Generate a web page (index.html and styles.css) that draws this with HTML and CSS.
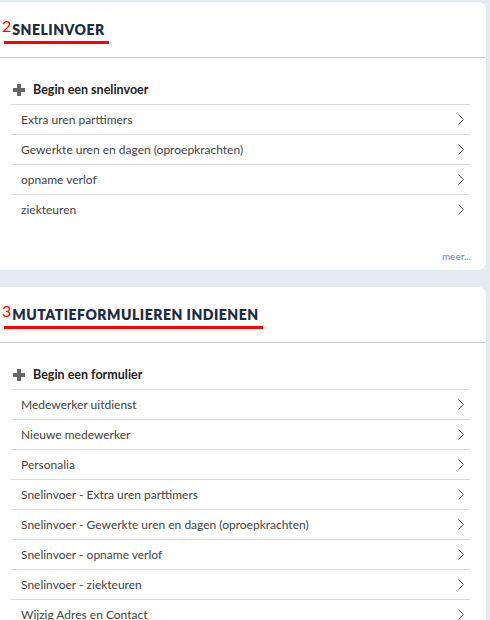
FILE: index.html
```html
<!DOCTYPE html>
<html lang="nl">
<head>
  <meta charset="UTF-8" />
  <title>Snelinvoer en mutatieformulieren</title>
  <link rel="stylesheet" href="styles.css">
</head>
<body>
  <div class="card">
    <div class="card-head">
      <h2 class="title"><span class="num">2</span>SNELINVOER</h2>
    </div>
    <ul class="list">
      <li class="start"><span class="plus"></span>Begin een snelinvoer</li>
      <li>Extra uren parttimers <svg class="chev" viewBox="0 0 6 11"><polyline points="0.5,0.5 5.5,5.5 0.5,10.5" /></svg></li>
      <li>Gewerkte uren en dagen (oproepkrachten) <svg class="chev" viewBox="0 0 6 11"><polyline points="0.5,0.5 5.5,5.5 0.5,10.5" /></svg></li>
      <li>opname verlof <svg class="chev" viewBox="0 0 6 11"><polyline points="0.5,0.5 5.5,5.5 0.5,10.5" /></svg></li>
      <li>ziekteuren <svg class="chev" viewBox="0 0 6 11"><polyline points="0.5,0.5 5.5,5.5 0.5,10.5" /></svg></li>
    </ul>
    <div class="more"><a href="#">meer...</a></div>
  </div>

  <div class="card">
    <div class="card-head">
      <h2 class="title"><span class="num">3</span>MUTATIEFORMULIEREN INDIENEN</h2>
    </div>
    <ul class="list">
      <li class="start"><span class="plus"></span>Begin een formulier</li>
      <li>Medewerker uitdienst <svg class="chev" viewBox="0 0 6 11"><polyline points="0.5,0.5 5.5,5.5 0.5,10.5" /></svg></li>
      <li>Nieuwe medewerker <svg class="chev" viewBox="0 0 6 11"><polyline points="0.5,0.5 5.5,5.5 0.5,10.5" /></svg></li>
      <li>Personalia <svg class="chev" viewBox="0 0 6 11"><polyline points="0.5,0.5 5.5,5.5 0.5,10.5" /></svg></li>
      <li>Snelinvoer - Extra uren parttimers <svg class="chev" viewBox="0 0 6 11"><polyline points="0.5,0.5 5.5,5.5 0.5,10.5" /></svg></li>
      <li>Snelinvoer - Gewerkte uren en dagen (oproepkrachten) <svg class="chev" viewBox="0 0 6 11"><polyline points="0.5,0.5 5.5,5.5 0.5,10.5" /></svg></li>
      <li>Snelinvoer - opname verlof <svg class="chev" viewBox="0 0 6 11"><polyline points="0.5,0.5 5.5,5.5 0.5,10.5" /></svg></li>
      <li>Snelinvoer - ziekteuren <svg class="chev" viewBox="0 0 6 11"><polyline points="0.5,0.5 5.5,5.5 0.5,10.5" /></svg></li>
      <li>Wijzig Adres en Contact <svg class="chev" viewBox="0 0 6 11"><polyline points="0.5,0.5 5.5,5.5 0.5,10.5" /></svg></li>
    </ul>
  </div>
</body>
</html>
```

FILE: styles.css
```css
body {
  margin: 0;
  padding-top: 2px;
  background: #e4eaf2;
  font-family: Lato, "Liberation Sans", sans-serif;
  color: #444;
  overflow: hidden;
}
.card {
  background: #fff;
  width: 492px;
  margin-left: -6px;
  margin-bottom: 17px;
  border-radius: 8px;
}
.card-head {
  height: 55px;
  border-bottom: 1px solid #c6cbd2;
  padding-left: 10px;
}
.title {
  display: inline-block;
  margin: 16px 0 0 0;
  padding-right: 4px;
  font-size: 14px;
  line-height: 22px;
  font-weight: 800;
  letter-spacing: 0.5px;
  color: #1b2b42;
  border-bottom: 3px solid #f00;
}
.num {
  font-size: 16px;
  font-weight: 400;
  letter-spacing: 0;
  color: #f00;
  margin-left: -2px;
  margin-right: 1px;
  position: relative;
  top: -3px;
}
.list {
  list-style: none;
  margin: 0 0 0 17px;
  padding: 17px 0 0 0;
  width: 459px;
}
.list li {
  height: 29px;
  border-bottom: 1px solid #dcdcdc;
  padding-left: 10px;
  font-size: 12px;
  display: flex;
  align-items: center;
}
.list li:last-child {
  border-bottom: none;
}
.list li.start {
  padding-left: 2px;
  font-size: 12.5px;
  font-weight: 700;
  color: #222;
}
.plus {
  width: 12px;
  height: 12px;
  margin-right: 8px;
  background:
    linear-gradient(#666, #666) center / 12px 4px no-repeat,
    linear-gradient(#666, #666) center / 4px 12px no-repeat;
}
.chev {
  margin-left: auto;
  margin-right: 6px;
  width: 6px;
  height: 11px;
  fill: none;
  stroke: #555;
  stroke-width: 1;
}
.more {
  text-align: right;
  padding: 25px 15px 7px 0;
  font-size: 10px;
  line-height: 14px;
}
.more a {
  color: #5b8bd6;
  text-decoration: none;
}
```
